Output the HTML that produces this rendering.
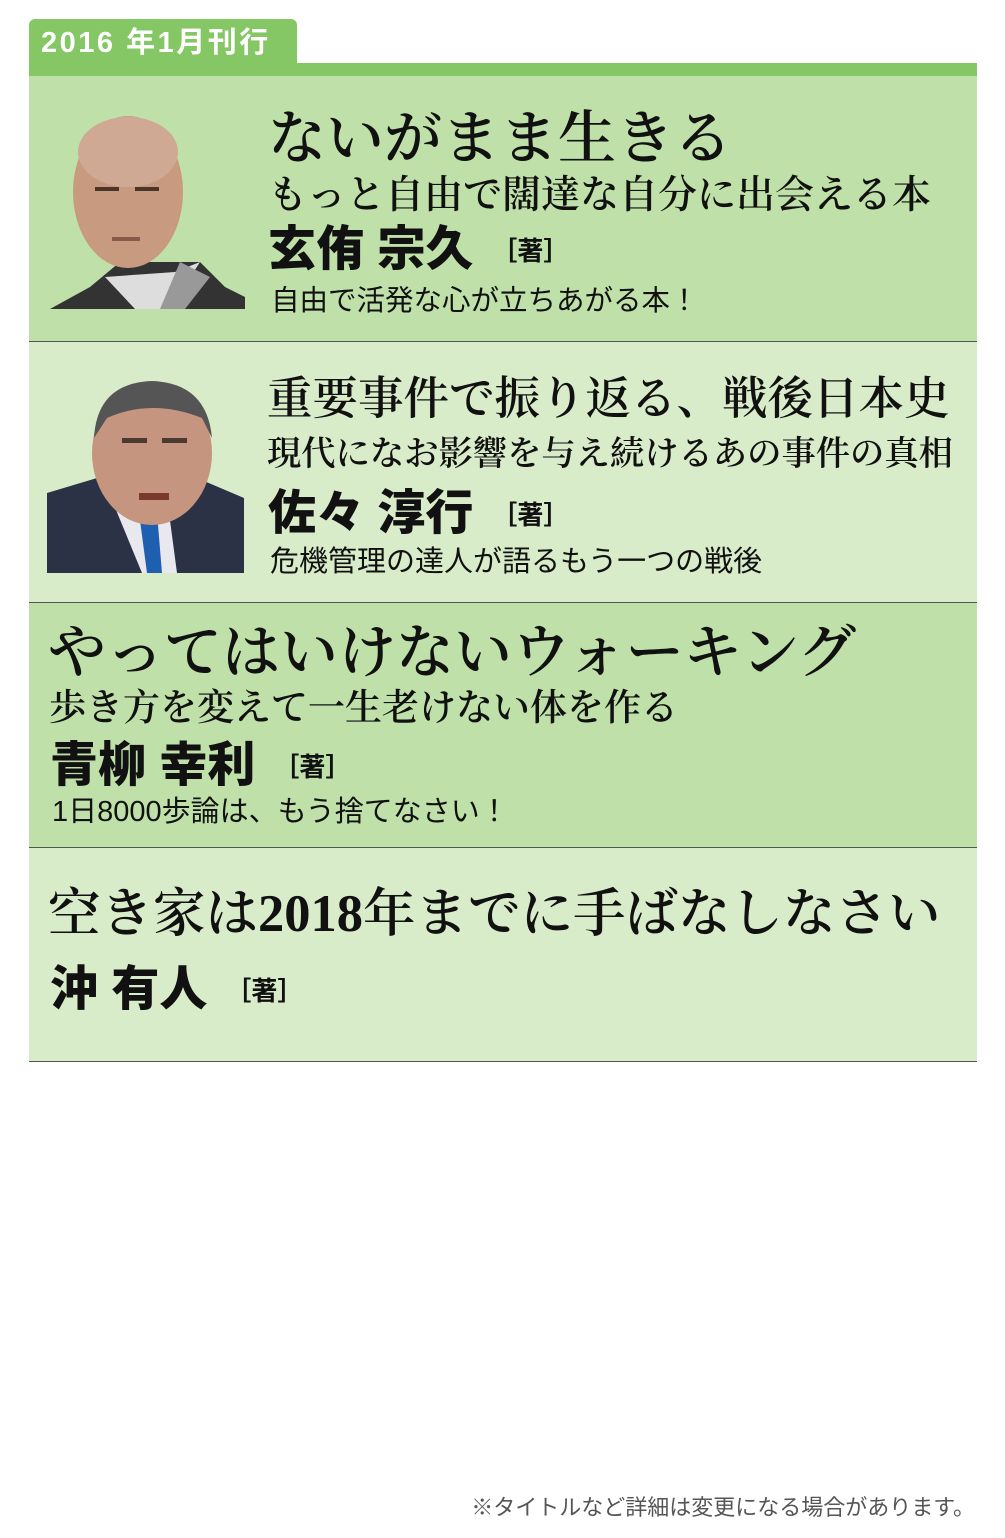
<!DOCTYPE html>
<html><head><meta charset="utf-8"><style>
*{margin:0;padding:0;box-sizing:border-box}
body{width:1005px;height:1538px;background:#fff;position:relative;overflow:hidden;font-family:"Liberation Sans","Noto Sans CJK JP",sans-serif;color:#111}
.a{position:absolute;white-space:nowrap;line-height:1}
.serif{font-family:"Liberation Serif","Noto Serif CJK SC",serif;font-weight:600}
.b{font-weight:bold}
.sec{position:absolute;left:29px;width:948px;border-bottom:1.5px solid #555}
.n{font-weight:900;font-size:48px}
.cho{font-size:26px;font-weight:bold;margin-left:18px;vertical-align:5px}
</style></head><body>
<div class="a b" style="left:29px;top:19px;width:268px;height:50px;background:#86c765;border-radius:6px 6px 0 0;"></div>
<div class="a b" style="left:41px;top:29px;font-size:29px;letter-spacing:2.5px;color:#fff;">2016 年1月刊行</div>
<div class="a" style="left:29px;top:63px;width:948px;height:13px;background:#86c765"></div>

<div class="sec" style="top:76px;height:266px;background:#bfe0a9"></div>
<div class="sec" style="top:342px;height:261px;background:#d9ecca"></div>
<div class="sec" style="top:603px;height:245px;background:#bfe0a9"></div>
<div class="sec" style="top:848px;height:214px;background:#d9ecca"></div>

<svg class="a" style="left:50px;top:112px" width="195" height="200" viewBox="0 0 195 200">
<path d="M0 197 L40 175 L70 150 L150 150 L175 175 L195 185 L195 197Z" fill="#333"/>
<path d="M55 165 L85 197 L120 197 L150 150 L125 160Z" fill="#ddd"/>
<path d="M130 150 L160 165 L135 197 L110 197Z" fill="#999"/>
<ellipse cx="78" cy="80" rx="55" ry="76" fill="#c89a80"/>
<ellipse cx="78" cy="40" rx="50" ry="35" fill="#cfa993"/>
<rect x="45" y="75" width="24" height="4" fill="#4a3528"/><rect x="85" y="75" width="24" height="4" fill="#4a3528"/>
<rect x="62" y="125" width="28" height="4" fill="#8a5a4a"/>
</svg>

<svg class="a" style="left:47px;top:378px" width="197" height="195" viewBox="0 0 197 195">
<path d="M0 115 L50 100 L150 100 L197 120 L197 195 L0 195Z" fill="#2b3245"/>
<path d="M60 110 L95 195 L130 195 L120 120Z" fill="#e8e8ee"/>
<path d="M92 135 L110 135 L115 195 L100 195Z" fill="#1f5fb0"/>
<ellipse cx="105" cy="75" rx="60" ry="72" fill="#c6957f"/>
<path d="M47 60 Q50 5 105 3 Q160 5 165 60 L155 40 Q105 20 60 40Z" fill="#555"/>
<rect x="75" y="60" width="25" height="5" fill="#4a3a30"/><rect x="115" y="60" width="25" height="5" fill="#4a3a30"/>
<rect x="92" y="115" width="30" height="7" fill="#7a3a30"/>
</svg>

<div class="a serif" style="left:268px;top:110px;font-size:58px;">ないがまま生きる</div>
<div class="a serif" style="left:268px;top:176px;font-size:39px;">もっと自由で闊達な自分に出会える本</div>
<div class="a" style="left:268px;top:226px;"><span class="n">玄侑 宗久</span><span class="cho">［著］</span></div>
<div class="a" style="left:271px;top:287px;font-size:28.5px;">自由で活発な心が立ちあがる本！</div>

<div class="a serif" style="left:267px;top:376px;font-size:45.5px;">重要事件で振り返る、戦後日本史</div>
<div class="a serif" style="left:267px;top:437px;font-size:34.3px;">現代になお影響を与え続けるあの事件の真相</div>
<div class="a" style="left:268px;top:490px;"><span class="n">佐々 淳行</span><span class="cho">［著］</span></div>
<div class="a" style="left:270px;top:548px;font-size:29px;">危機管理の達人が語るもう一つの戦後</div>

<div class="a serif" style="left:48px;top:624px;font-size:58px;">やってはいけないウォーキング</div>
<div class="a serif" style="left:49px;top:690px;font-size:37px;">歩き方を変えて一生老けない体を作る</div>
<div class="a" style="left:50px;top:742px;"><span class="n">青柳 幸利</span><span class="cho">［著］</span></div>
<div class="a" style="left:52px;top:798px;font-size:29px;">1日8000歩論は、もう捨てなさい！</div>

<div class="a serif" style="left:48px;top:888px;font-size:52.5px;">空き家は2018年までに手ばなしなさい</div>
<div class="a" style="left:50px;top:966px;"><span class="n">沖 有人</span><span class="cho">［著］</span></div>

<div class="a" style="right:30px;top:1497px;font-size:22px;color:#555;">※タイトルなど詳細は変更になる場合があります。</div>
</body></html>
